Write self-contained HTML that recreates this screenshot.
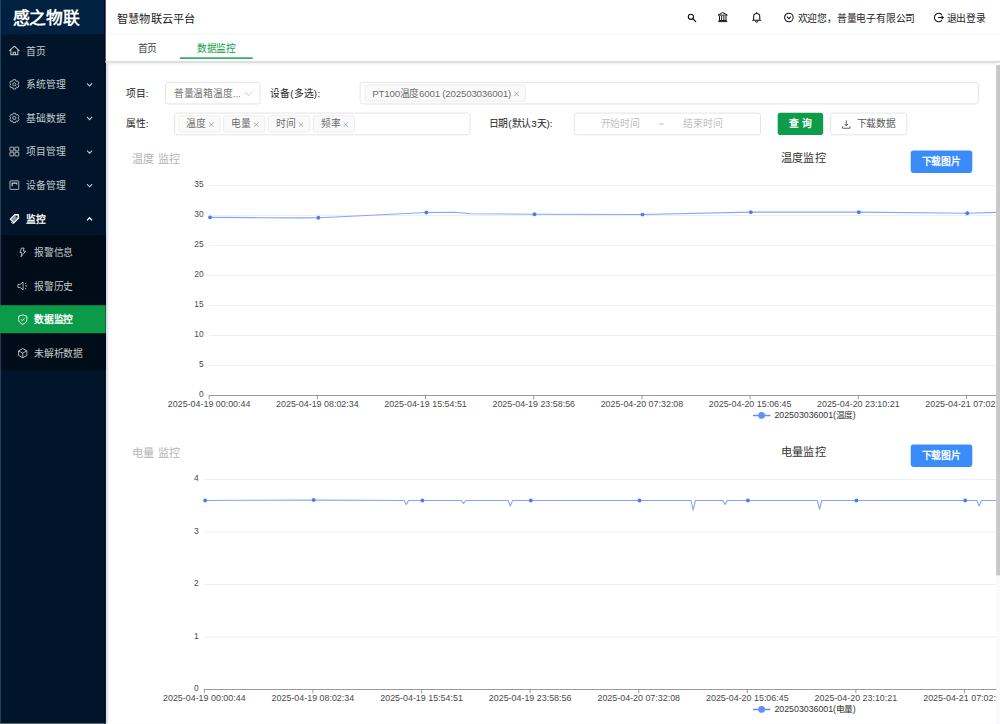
<!DOCTYPE html>
<html lang="zh-CN">
<head>
<meta charset="utf-8">
<title>智慧物联云平台</title>
<style>
*{box-sizing:border-box;margin:0;padding:0}
html,body{width:1000px;height:724px;overflow:hidden;background:#fff}
body{font-family:"Liberation Sans",sans-serif;font-size:14px;color:rgba(0,0,0,.75)}
#app{position:absolute;left:0;top:0;width:1428.6px;height:1034.3px;transform:scale(.7);transform-origin:0 0;background:#f0f2f5;overflow:hidden}
.abs{position:absolute}
#side{position:absolute;left:0;top:0;width:150.7px;height:1034.3px;background:#001529;box-shadow:2px 0 6px rgba(0,21,41,.22);z-index:5}
#side .edge{position:absolute;left:0;top:0;width:1.4px;height:100%;background:#2e5572;z-index:9}
#side .redge{position:absolute;right:0;top:0;width:2.2px;height:100%;background:#01042a;z-index:9}
#logo{position:absolute;left:0;top:0;width:100%;height:48.6px;background:#002140;color:#fff;font-weight:bold;font-size:24px;line-height:52.4px;padding-left:18px;white-space:nowrap}
.mi{position:absolute;left:0;width:100%;height:40px;line-height:40px;color:rgba(255,255,255,.78);white-space:nowrap;font-size:14px}
.mi svg.ic{position:absolute;left:12.6px;top:13.4px;width:15px;height:15px;overflow:visible}
.mi span{position:absolute;left:37.3px;top:1.2px}
.mi svg.ar{position:absolute;left:123px;top:15.6px;width:10px;height:10px}
.mi.sub svg.ic{left:24.6px;top:12.8px}
.mi.sub span{left:48.6px}
#submenu{position:absolute;left:0;top:336px;width:100%;height:192px;background:#000c17}
.mi.on{background:#0b9a48;color:#fff;z-index:10}
#hdr{z-index:6;position:absolute;left:150.7px;top:0;right:0;height:48.8px;background:#fff;border-bottom:1.4px solid #e9ebee}
#hdr .t{position:absolute;left:16.5px;top:0;line-height:55.4px;font-size:16px;color:#222}
#hdr .r{position:absolute;top:0;line-height:52.6px;font-size:14px;color:#222;white-space:nowrap}
#hdr svg{position:absolute;overflow:visible}
#tabs{z-index:6;position:absolute;left:150.7px;top:48.8px;right:0;height:41.7px;background:#fff;border-bottom:3px solid #dddfe4}
#tabs .tb{position:absolute;top:0;line-height:40px;font-size:14px;color:#444;white-space:nowrap}
#tabs .tb.on{color:#0b9a48}
#tabs .ink{position:absolute;left:106.4px;top:33px;width:104px;height:2px;background:#0b9a48}
#card{position:absolute;left:153.5px;top:91.5px;width:1269.5px;height:950px;background:#fff;overflow:hidden}
.lbl{position:absolute;letter-spacing:.4px;font-size:14px;color:#222;line-height:33.4px;white-space:nowrap}
.box{position:absolute;height:32px;border:1px solid #d9d9d9;border-radius:4px;background:#fff}
.tag{position:absolute;top:3px;height:24px;line-height:23px;border:1px solid #e8e8e8;background:#fafafa;border-radius:2px;color:rgba(0,0,0,.62);font-size:14px;padding-left:10px;white-space:nowrap}
.tag svg{position:absolute;right:7.5px;top:7.6px;width:8px;height:8px}
.ph{position:absolute;top:0;line-height:31.4px;color:#bfbfbf;font-size:14px;white-space:nowrap}
.btn{position:absolute;height:32px;border-radius:4px;line-height:33.4px;text-align:center;font-size:14px;white-space:nowrap}
.gt{position:absolute;font-size:16px;color:#b4b4b4;white-space:nowrap;line-height:20px}
.ct{position:absolute;font-size:16px;color:#333;white-space:nowrap;line-height:20px;font-weight:500}
.chart{position:absolute;left:0;width:1269.5px;height:420px}
.chart text{font-family:"Liberation Sans",sans-serif;font-size:12px;fill:#4a4a4a}
#sb{position:absolute;left:1423px;top:89.2px;width:6px;height:945px;background:#fbfbfb}
#sb div{position:absolute;left:0;top:4px;width:6px;height:729px;background:#c8c8c8}
</style>
</head>
<body>
<div id="app">
<div id="side"><div class="edge"></div><div class="redge"></div>
<div id="logo">感之物联</div>
<div class="mi" style="top:52px;"><svg class="ic" viewBox="0 0 15 15"><path d="M.2 7.6 L7.5 1 L14.8 7.6 M2.5 6 V13.2 H12.5 V6 M5.8 13.2 V9.6 H9.2 V13.2" fill="none" stroke="currentColor" stroke-linejoin="round" stroke-width="1.45"/></svg><span>首页</span></div>
<div class="mi" style="top:100px;"><svg class="ic" viewBox="0 0 15 15"><path d="M9.29 0.84 L5.71 0.84 L5.34 2.66 L4.38 3.21 L2.62 2.62 L0.84 5.71 L2.23 6.95 L2.23 8.05 L0.84 9.29 L2.62 12.38 L4.38 11.79 L5.34 12.34 L5.71 14.16 L9.29 14.16 L9.66 12.34 L10.62 11.79 L12.38 12.38 L14.16 9.29 L12.77 8.05 L12.77 6.95 L14.16 5.71 L12.38 2.62 L10.62 3.21 L9.66 2.66 Z" fill="none" stroke="currentColor" stroke-linejoin="round" stroke-width="1.2"/><circle cx="7.5" cy="7.5" r="2.3" fill="none" stroke="currentColor" stroke-linejoin="round" stroke-width="1.2"/></svg><span>系统管理</span><svg class="ar" viewBox="0 0 10 10"><path d="M1.4 3.1 L5 6.9 L8.6 3.1" fill="none" stroke="currentColor" stroke-width="1.5"/></svg></div>
<div class="mi" style="top:148px;"><svg class="ic" viewBox="0 0 15 15"><path d="M9.29 0.84 L5.71 0.84 L5.34 2.66 L4.38 3.21 L2.62 2.62 L0.84 5.71 L2.23 6.95 L2.23 8.05 L0.84 9.29 L2.62 12.38 L4.38 11.79 L5.34 12.34 L5.71 14.16 L9.29 14.16 L9.66 12.34 L10.62 11.79 L12.38 12.38 L14.16 9.29 L12.77 8.05 L12.77 6.95 L14.16 5.71 L12.38 2.62 L10.62 3.21 L9.66 2.66 Z" fill="none" stroke="currentColor" stroke-linejoin="round" stroke-width="1.2"/><circle cx="7.5" cy="7.5" r="2.3" fill="none" stroke="currentColor" stroke-linejoin="round" stroke-width="1.2"/></svg><span>基础数据</span><svg class="ar" viewBox="0 0 10 10"><path d="M1.4 3.1 L5 6.9 L8.6 3.1" fill="none" stroke="currentColor" stroke-width="1.5"/></svg></div>
<div class="mi" style="top:196px;"><svg class="ic" viewBox="0 0 15 15"><rect x="1.2" y="1.2" width="5.4" height="5.4" rx=".8" fill="none" stroke="currentColor" stroke-linejoin="round" stroke-width="1.25"/><rect x="1.2" y="8.4" width="5.4" height="5.4" rx=".8" fill="none" stroke="currentColor" stroke-linejoin="round" stroke-width="1.25"/><rect x="8.4" y="1.2" width="5.4" height="5.4" rx=".8" fill="none" stroke="currentColor" stroke-linejoin="round" stroke-width="1.25"/><rect x="8.4" y="8.4" width="5.4" height="5.4" rx=".8" fill="none" stroke="currentColor" stroke-linejoin="round" stroke-width="1.25"/></svg><span>项目管理</span><svg class="ar" viewBox="0 0 10 10"><path d="M1.4 3.1 L5 6.9 L8.6 3.1" fill="none" stroke="currentColor" stroke-width="1.5"/></svg></div>
<div class="mi" style="top:244px;"><svg class="ic" viewBox="0 0 15 15"><rect x="1.2" y="1.4" width="12.6" height="12.2" rx="1" fill="none" stroke="currentColor" stroke-linejoin="round" stroke-width="1.25"/><path d="M4.4 9 V4.6 H10.8 V6.6" fill="none" stroke="currentColor" stroke-linejoin="round" stroke-width="1.7"/></svg><span>设备管理</span><svg class="ar" viewBox="0 0 10 10"><path d="M1.4 3.1 L5 6.9 L8.6 3.1" fill="none" stroke="currentColor" stroke-width="1.5"/></svg></div>
<div class="mi" style="top:292px;color:#fff;font-weight:bold"><svg class="ic" viewBox="0 0 15 15"><path d="M8.4 1.4 L13.4 1.6 L13.8 6.6 L6.8 13.4 L1.6 8.2 Z" fill="currentColor" fill-opacity=".55" stroke="currentColor" stroke-width="1.5" stroke-linejoin="round"/><path d="M3 12.2 L5.4 14.6 L12.6 7.6" fill="none" stroke="currentColor" stroke-width="1.3"/><circle cx="10.6" cy="4.6" r="1.1" fill="#001529"/></svg><span>监控</span><svg class="ar" viewBox="0 0 10 10"><path d="M1.4 6.9 L5 3.1 L8.6 6.9" fill="none" stroke="currentColor" stroke-width="1.8"/></svg></div>
<div id="submenu"></div>
<div class="mi sub" style="top:340px;"><svg class="ic" viewBox="0 0 15 15"><path d="M9.4 1.4 H5.6 L3.6 8 H6.4 L5 13.8 L11.6 5.8 H8.2 Z" fill="none" stroke="currentColor" stroke-linejoin="round" stroke-width="1.2"/></svg><span>报警信息</span></div>
<div class="mi sub" style="top:388px;"><svg class="ic" viewBox="0 0 15 15"><path d="M.6 5.4 H3.6 L8 2 V13 L3.6 9.6 H.6 Z" fill="none" stroke="currentColor" stroke-linejoin="round" stroke-width="1.2"/><path d="M10.8 4.4 L12.6 3.2 M11 7.5 H13.8 M10.8 10.6 L12.6 11.8" fill="none" stroke="currentColor" stroke-linejoin="round" stroke-width="1.2"/></svg><span>报警历史</span></div>
<div class="mi sub on" style="top:436px;font-weight:bold"><svg class="ic" viewBox="0 0 15 15"><path d="M7.5 .8 L13.4 2.8 V7.6 C13.4 10.6 10.6 13 7.5 14.4 C4.4 13 1.6 10.6 1.6 7.6 V2.8 Z" fill="none" stroke="currentColor" stroke-linejoin="round" stroke-width="1.3"/><path d="M5 7.2 L6.9 9.1 L10.2 5.4" fill="none" stroke="currentColor" stroke-linejoin="round" stroke-width="1.3"/></svg><span>数据监控</span></div>
<div class="mi sub" style="top:484px;"><svg class="ic" viewBox="0 0 15 15"><path d="M7.5 .9 L13.4 4.2 V10.8 L7.5 14.1 L1.6 10.8 V4.2 Z M1.8 4.3 L7.5 7.5 L13.2 4.3 M7.5 7.5 V14" fill="none" stroke="currentColor" stroke-linejoin="round" stroke-width="1.25"/></svg><span>未解析数据</span></div>
</div>
<div id="hdr"><div class="t">智慧物联云平台</div>
<svg style="left:831.8px;top:19px;width:13px;height:13px" viewBox="0 0 14 14"><circle cx="5.4" cy="5.4" r="4" fill="none" stroke="#111" stroke-width="1.7"/><path d="M8.4 8.4 L12.8 12.8" stroke="#111" stroke-width="1.9" stroke-linecap="round"/></svg>
<svg style="left:874.6px;top:16.8px;width:15px;height:15px" viewBox="0 0 15 15"><path d="M7.5 .8 L14 4.6 H1 Z M1 13.9 H14 M2.9 5.8 V12 M5.9 5.8 V12 M9.1 5.8 V12 M12.1 5.8 V12 M1.8 12.3 H13.2" fill="none" stroke="#111" stroke-width="1.4" stroke-linejoin="round"/></svg>
<svg style="left:923px;top:16.7px;width:14px;height:16px" viewBox="0 0 14 16"><path d="M7 .8 V2.2 M2.6 11.8 V7 C2.6 4 4.6 2.4 7 2.4 C9.4 2.4 11.4 4 11.4 7 V11.8 M1.2 12 H12.8 M5.4 13.6 C5.8 15 8.2 15 8.6 13.6" fill="none" stroke="#111" stroke-width="1.5" stroke-linejoin="round" stroke-linecap="round"/></svg>
<svg style="left:969.8px;top:18px;width:14px;height:14px" viewBox="0 0 14 14"><circle cx="7" cy="7" r="6.1" fill="none" stroke="#111" stroke-width="1.5"/><path d="M4.2 5.8 L7 8.8 L9.8 5.8" fill="none" stroke="#111" stroke-width="1.5"/></svg>
<div class="r" style="left:988.7px">欢迎您，普量电子有限公司</div>
<svg style="left:1183.6px;top:18px;width:14px;height:14px" viewBox="0 0 14 14"><path d="M11.8 3.2 A6.1 6.1 0 1 0 11.8 10.8" fill="none" stroke="#111" stroke-width="1.5"/><path d="M6.2 7 H13.4 M11.2 4.8 L13.4 7 L11.2 9.2" fill="none" stroke="#111" stroke-width="1.5"/></svg>
<div class="r" style="left:1201.6px">退出登录</div>
</div>
<div id="tabs"><div class="tb" style="left:45.8px">首页</div><div class="tb on" style="left:130.4px">数据监控</div><div class="ink"></div></div>
<div id="card"><div class="abs" style="left:0;top:0;width:1270px;height:1.6px;background:#f1f3f7"></div>
<div class="lbl" style="left:25.8px;top:25.5px">项目:</div>
<div class="box" style="left:82.9px;top:25.5px;width:136px"><div class="ph" style="left:11px;color:rgba(0,0,0,.6)">普量温箱温度...</div><svg class="abs" style="left:112px;top:10px;width:12px;height:12px" viewBox="0 0 12 12"><path d="M1 3.4 L6 8.6 L11 3.4" fill="none" stroke="#bdbdbd" stroke-width="1.1"/></svg></div>
<div class="lbl" style="left:232.2px;top:25.5px">设备(多选):</div>
<div class="box" style="left:360.8px;top:25.5px;width:884px"><div class="tag" style="left:5.4px;width:230.0px;letter-spacing:-.34px">PT100温度6001 (202503036001)<svg viewBox="0 0 8 8"><path d="M.8 .8 L7.2 7.2 M7.2 .8 L.8 7.2" stroke="#8c8c8c" stroke-width="1" fill="none"/></svg></div></div>
<div class="lbl" style="left:25.8px;top:69.5px">属性:</div>
<div class="box" style="left:95.8px;top:69.5px;width:423px"><div class="tag" style="left:5.0px;width:59.5px;">温度<svg viewBox="0 0 8 8"><path d="M.8 .8 L7.2 7.2 M7.2 .8 L.8 7.2" stroke="#8c8c8c" stroke-width="1" fill="none"/></svg></div><div class="tag" style="left:69.0px;width:59.5px;">电量<svg viewBox="0 0 8 8"><path d="M.8 .8 L7.2 7.2 M7.2 .8 L.8 7.2" stroke="#8c8c8c" stroke-width="1" fill="none"/></svg></div><div class="tag" style="left:133.0px;width:59.5px;">时间<svg viewBox="0 0 8 8"><path d="M.8 .8 L7.2 7.2 M7.2 .8 L.8 7.2" stroke="#8c8c8c" stroke-width="1" fill="none"/></svg></div><div class="tag" style="left:197.0px;width:59.5px;">频率<svg viewBox="0 0 8 8"><path d="M.8 .8 L7.2 7.2 M7.2 .8 L.8 7.2" stroke="#8c8c8c" stroke-width="1" fill="none"/></svg></div></div>
<div class="lbl" style="left:544.6px;top:69.5px;letter-spacing:0">日期(默认3天):</div>
<div class="box" style="left:666.9px;top:69.5px;width:267px"><div class="ph" style="left:36.5px">开始时间</div><div class="ph" style="left:119px">~</div><div class="ph" style="left:154px;letter-spacing:.3px">结束时间</div></div>
<div class="btn" style="left:957.9px;top:69.5px;width:64.5px;background:#0e9c4b;color:#fff;font-weight:bold">查 询</div>
<div class="btn" style="left:1032.2px;top:69.5px;width:110px;border:1px solid #d9d9d9;background:#fff;color:#555;line-height:31.4px;text-align:left;padding-left:37px"><svg class="abs" style="left:15.5px;top:8.6px;width:14px;height:14px" viewBox="0 0 14 14"><path d="M7 1 V8.4 M4.4 6 L7 8.6 L9.6 6 M1.6 9.6 V12.2 H12.4 V9.6" fill="none" stroke="#444" stroke-width="1.2"/></svg>下载数据</div>
<div class="gt" style="left:35.1px;top:126.4px">温度 监控</div>
<div class="ct" style="left:962.2px;top:124.2px">温度监控</div>
<div class="btn" style="left:1147.2px;top:123.1px;width:88px;background:#3b8cfb;color:#fff;font-weight:bold">下载图片</div>
<svg class="chart" style="top:113.1px" viewBox="0 0 1269.5 420">
<text x="136.8" y="362.6" text-anchor="end">0</text><path d="M144.4 317.1 H1269.5" stroke="#e3e8f3" stroke-width="1"/><text x="136.8" y="319.7" text-anchor="end">5</text><path d="M144.4 274.3 H1269.5" stroke="#e3e8f3" stroke-width="1"/><text x="136.8" y="276.9" text-anchor="end">10</text><path d="M144.4 231.4 H1269.5" stroke="#e3e8f3" stroke-width="1"/><text x="136.8" y="234.0" text-anchor="end">15</text><path d="M144.4 188.6 H1269.5" stroke="#e3e8f3" stroke-width="1"/><text x="136.8" y="191.2" text-anchor="end">20</text><path d="M144.4 145.7 H1269.5" stroke="#e3e8f3" stroke-width="1"/><text x="136.8" y="148.3" text-anchor="end">25</text><path d="M144.4 102.9 H1269.5" stroke="#e3e8f3" stroke-width="1"/><text x="136.8" y="105.5" text-anchor="end">30</text><path d="M144.4 60.0 H1269.5" stroke="#e3e8f3" stroke-width="1"/><text x="136.8" y="62.6" text-anchor="end">35</text>
<path d="M144.4 360 H1269.5" stroke="#6e7079" stroke-width="1"/>
<path d="M144.8 360 V365.4" stroke="#6e7079" stroke-width="1"/><text x="144.8" y="376.4" text-anchor="middle" textLength="118" lengthAdjust="spacingAndGlyphs">2025-04-19 00:00:44</text>
<path d="M299.4 360 V365.4" stroke="#6e7079" stroke-width="1"/><text x="299.4" y="376.4" text-anchor="middle" textLength="118" lengthAdjust="spacingAndGlyphs">2025-04-19 08:02:34</text>
<path d="M453.9 360 V365.4" stroke="#6e7079" stroke-width="1"/><text x="453.9" y="376.4" text-anchor="middle" textLength="118" lengthAdjust="spacingAndGlyphs">2025-04-19 15:54:51</text>
<path d="M608.5 360 V365.4" stroke="#6e7079" stroke-width="1"/><text x="608.5" y="376.4" text-anchor="middle" textLength="118" lengthAdjust="spacingAndGlyphs">2025-04-19 23:58:56</text>
<path d="M763.1 360 V365.4" stroke="#6e7079" stroke-width="1"/><text x="763.1" y="376.4" text-anchor="middle" textLength="118" lengthAdjust="spacingAndGlyphs">2025-04-20 07:32:08</text>
<path d="M917.6 360 V365.4" stroke="#6e7079" stroke-width="1"/><text x="917.6" y="376.4" text-anchor="middle" textLength="118" lengthAdjust="spacingAndGlyphs">2025-04-20 15:06:45</text>
<path d="M1072.2 360 V365.4" stroke="#6e7079" stroke-width="1"/><text x="1072.2" y="376.4" text-anchor="middle" textLength="118" lengthAdjust="spacingAndGlyphs">2025-04-20 23:10:21</text>
<path d="M1226.8 360 V365.4" stroke="#6e7079" stroke-width="1"/><text x="1226.8" y="376.4" text-anchor="middle" textLength="118" lengthAdjust="spacingAndGlyphs">2025-04-21 07:02:36</text>
<path d="M146.1 105.5 L217.9 106.0 L275.1 106.3 L300.8 106.1 L317.9 105.3 L420.1 100.4 L455.1 98.5 L495.1 98.3 L517.9 100.4 L609.6 101.0 L763.9 101.5 L918.6 98.1 L1072.9 98.1 L1227.8 99.7 L1270.1 98.4" fill="none" stroke="#88a6f7" stroke-width="1.6" stroke-linejoin="round"/>
<circle cx="146.1" cy="105.5" r="2.75" fill="#4b7bf3"/><circle cx="300.8" cy="106.1" r="2.75" fill="#4b7bf3"/><circle cx="455.1" cy="98.5" r="2.75" fill="#4b7bf3"/><circle cx="609.6" cy="101.0" r="2.75" fill="#4b7bf3"/><circle cx="763.9" cy="101.5" r="2.75" fill="#4b7bf3"/><circle cx="918.6" cy="98.1" r="2.75" fill="#4b7bf3"/><circle cx="1072.9" cy="98.1" r="2.75" fill="#4b7bf3"/><circle cx="1227.8" cy="99.7" r="2.75" fill="#4b7bf3"/>
<path d="M921.5 388.5 H946.5" stroke="#5b8ff9" stroke-width="2.2"/><circle cx="934" cy="388.5" r="4.8" fill="#6190f8"/><text x="952.4" y="392.6" style="fill:#333" textLength="116" lengthAdjust="spacingAndGlyphs">202503036001(温度)</text>
</svg>
<div class="gt" style="left:35.1px;top:546.4px">电量 监控</div>
<div class="ct" style="left:962.2px;top:544.2px">电量监控</div>
<div class="btn" style="left:1147.2px;top:543.1px;width:88px;background:#3b8cfb;color:#fff;font-weight:bold">下载图片</div>
<svg class="chart" style="top:533.1px" viewBox="0 0 1269.5 420">
<text x="129.8" y="362.6" text-anchor="end">0</text><path d="M137.4 285.0 H1269.5" stroke="#e3e8f3" stroke-width="1"/><text x="129.8" y="287.6" text-anchor="end">1</text><path d="M137.4 210.0 H1269.5" stroke="#e3e8f3" stroke-width="1"/><text x="129.8" y="212.6" text-anchor="end">2</text><path d="M137.4 135.0 H1269.5" stroke="#e3e8f3" stroke-width="1"/><text x="129.8" y="137.6" text-anchor="end">3</text><path d="M137.4 60.0 H1269.5" stroke="#e3e8f3" stroke-width="1"/><text x="129.8" y="62.6" text-anchor="end">4</text>
<path d="M137.4 360 H1269.5" stroke="#6e7079" stroke-width="1"/>
<path d="M137.9 360 V365.4" stroke="#6e7079" stroke-width="1"/><text x="137.9" y="376.4" text-anchor="middle" textLength="118" lengthAdjust="spacingAndGlyphs">2025-04-19 00:00:44</text>
<path d="M293.0 360 V365.4" stroke="#6e7079" stroke-width="1"/><text x="293.0" y="376.4" text-anchor="middle" textLength="118" lengthAdjust="spacingAndGlyphs">2025-04-19 08:02:34</text>
<path d="M448.2 360 V365.4" stroke="#6e7079" stroke-width="1"/><text x="448.2" y="376.4" text-anchor="middle" textLength="118" lengthAdjust="spacingAndGlyphs">2025-04-19 15:54:51</text>
<path d="M603.3 360 V365.4" stroke="#6e7079" stroke-width="1"/><text x="603.3" y="376.4" text-anchor="middle" textLength="118" lengthAdjust="spacingAndGlyphs">2025-04-19 23:58:56</text>
<path d="M758.5 360 V365.4" stroke="#6e7079" stroke-width="1"/><text x="758.5" y="376.4" text-anchor="middle" textLength="118" lengthAdjust="spacingAndGlyphs">2025-04-20 07:32:08</text>
<path d="M913.6 360 V365.4" stroke="#6e7079" stroke-width="1"/><text x="913.6" y="376.4" text-anchor="middle" textLength="118" lengthAdjust="spacingAndGlyphs">2025-04-20 15:06:45</text>
<path d="M1068.7 360 V365.4" stroke="#6e7079" stroke-width="1"/><text x="1068.7" y="376.4" text-anchor="middle" textLength="118" lengthAdjust="spacingAndGlyphs">2025-04-20 23:10:21</text>
<path d="M1223.9 360 V365.4" stroke="#6e7079" stroke-width="1"/><text x="1223.9" y="376.4" text-anchor="middle" textLength="118" lengthAdjust="spacingAndGlyphs">2025-04-21 07:02:36</text>
<path d="M139.1 90.0 L294.1 89.4 L423.4 90.0 L426.5 95.7 L429.6 90.0 L505.1 90.0 L508.2 94.5 L511.4 90.0 L571.9 90.0 L575.1 98.0 L578.2 90.0 L833.1 90.0 L836.2 103.7 L839.4 90.0 L878.8 90.0 L881.9 95.7 L885.1 90.0 L1013.6 90.0 L1016.8 102.5 L1019.9 90.0 L1241.6 90.0 L1244.8 98.0 L1247.9 90.0 L1270.1 90.0" fill="none" stroke="#88a6f7" stroke-width="1.6" stroke-linejoin="round"/>
<circle cx="139.1" cy="90.0" r="2.75" fill="#4b7bf3"/><circle cx="294.1" cy="89.3" r="2.75" fill="#4b7bf3"/><circle cx="449.4" cy="90.0" r="2.75" fill="#4b7bf3"/><circle cx="604.2" cy="90.0" r="2.75" fill="#4b7bf3"/><circle cx="759.6" cy="90.0" r="2.75" fill="#4b7bf3"/><circle cx="914.5" cy="90.0" r="2.75" fill="#4b7bf3"/><circle cx="1069.4" cy="90.0" r="2.75" fill="#4b7bf3"/><circle cx="1224.8" cy="90.0" r="2.75" fill="#4b7bf3"/>
<path d="M921.5 388.5 H946.5" stroke="#5b8ff9" stroke-width="2.2"/><circle cx="934" cy="388.5" r="4.8" fill="#6190f8"/><text x="952.4" y="392.6" style="fill:#333" textLength="116" lengthAdjust="spacingAndGlyphs">202503036001(电量)</text>
</svg>
</div>
<div id="sb"><div></div></div>
</div>
</body>
</html>
